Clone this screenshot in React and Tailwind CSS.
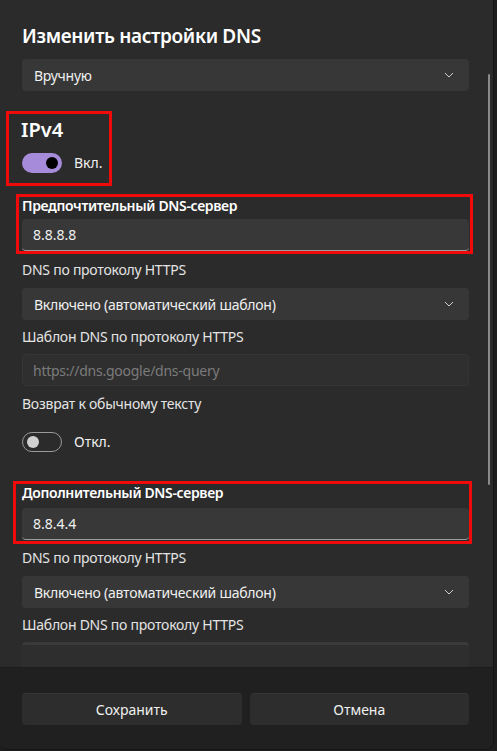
import React from "react";

const font = { fontFamily: '"Noto Sans", "Open Sans", sans-serif' };

const Chevron = () => (
  <svg width="10" height="6" viewBox="0 0 10 6" fill="none" className="text-[#cfcfcf]">
    <polyline points="1,1 5,5 9,1" stroke="currentColor" strokeWidth="1" />
  </svg>
);

const Select = ({ value }) => (
  <div className="flex h-[32px] items-center justify-between rounded-[4px] bg-[#373737] pl-[12px] pr-[15px] text-[14px] tracking-[-0.25px] text-[#f0f0f0]">
    <span>{value}</span>
    <Chevron />
  </div>
);

const Input = ({ value }) => (
  <div className="flex h-[32px] items-center rounded-[4px] border-b border-[#9c9c9c] bg-[#383838] px-[11px] text-[14px] text-[#f0f0f0]">
    {value}
  </div>
);

const Label = ({ children }) => (
  <div className="text-[14px] leading-[20px] tracking-[-0.25px] text-[#e4e4e4]">{children}</div>
);

const Toggle = ({ on, text }) => (
  <div className="flex items-center gap-[12px]">
    {on ? (
      <div className="flex h-[20px] w-[40px] items-center justify-end rounded-full bg-[#a68bdb] pr-[4px]">
        <div className="h-[12px] w-[12px] rounded-full bg-black" />
      </div>
    ) : (
      <div className="flex h-[20px] w-[40px] items-center rounded-full border border-[#9a9a9a] pl-[4px]">
        <div className="h-[12px] w-[12px] rounded-full bg-[#d0d0d0]" />
      </div>
    )}
    <span className="text-[14px] text-[#f0f0f0]">{text}</span>
  </div>
);

const redBox = "border-[3px] border-[#f00a0a]";

export default function App() {
  return (
    <div className="flex h-[751px] w-[497px] bg-[#1e1e1e]" style={font}>
      <div className="relative flex h-[750px] w-[494px] flex-col overflow-hidden rounded-b-[8px] border-r border-b border-[#161616] bg-[#2b2b2b]">
        <div className="flex-1 overflow-hidden pl-[22px] pr-[24px] pt-[22px]">
          <div className="h-[28px] text-[19px] font-semibold leading-[28px] tracking-[-0.35px] text-white">
            Изменить настройки DNS
          </div>
          <div className="mt-[9px]">
            <Select value="Вручную" />
          </div>

          {/* IPv4 */}
          <div className={`ml-[-16px] mt-[20px] w-[106px] pb-[10px] pl-[12px] pt-[3px] ${redBox}`}>
            <div className="text-[20px] font-semibold leading-[26px] text-white">IPv4</div>
            <div className="ml-[1px] mt-[9px]">
              <Toggle on text="Вкл." />
            </div>
          </div>

          {/* preferred */}
          <div className={`ml-[-6px] mr-[-4px] mt-[8px] pl-[3px] pr-[1px] pt-[1px] ${redBox}`}>
            <div className="text-[14px] font-semibold leading-[16px] tracking-[-0.35px] text-white">
              Предпочтительный DNS-сервер
            </div>
            <div className="mt-[5px]">
              <Input value="8.8.8.8" />
            </div>
          </div>

          <div className="mt-[6px]">
            <Label>DNS по протоколу HTTPS</Label>
          </div>
          <div className="mt-[8px]">
            <Select value="Включено (автоматический шаблон)" />
          </div>
          <div className="mt-[7px]">
            <Label>Шаблон DNS по протоколу HTTPS</Label>
          </div>
          <div className="mt-[7px] flex h-[32px] items-center rounded-[4px] border border-[#353535] bg-[#2f2f2f] px-[10px] text-[14px] tracking-[-0.25px] text-[#7b7b7b]">
            https://dns.google/dns-query
          </div>
          <div className="mt-[8px]">
            <Label>Возврат к обычному тексту</Label>
          </div>
          <div className="mt-[17px]">
            <Toggle text="Откл." />
          </div>

          {/* alternate */}
          <div className={`ml-[-9px] mr-[-3px] mt-[29px] pl-[6px] pt-[1px] pb-[1px] ${redBox}`}>
            <div className="text-[14px] font-semibold leading-[16px] tracking-[-0.35px] text-white">
              Дополнительный DNS-сервер
            </div>
            <div className="mt-[7px]">
              <Input value="8.8.4.4" />
            </div>
          </div>

          <div className="mt-[4px]">
            <Label>DNS по протоколу HTTPS</Label>
          </div>
          <div className="mt-[8px]">
            <Select value="Включено (автоматический шаблон)" />
          </div>
          <div className="mt-[7px]">
            <Label>Шаблон DNS по протоколу HTTPS</Label>
          </div>
          <div className="mt-[7px] h-[32px] rounded-[4px] border-t-[3px] border-[#3a3a3a] bg-[#2e2e2e]" />
        </div>

        <div className="absolute right-[3px] top-[74px] h-[411px] w-[2px] rounded-full bg-[#8a8a8a]" />

        <div className="flex h-[82px] shrink-0 items-start gap-[8px] border-t border-[#1c1c1c] bg-[#202020] pl-[22px] pr-[24px] pt-[25px]">
          <button className="h-[32px] flex-1 rounded-[4px] border-t border-[#343434] bg-[#2d2d2d] text-[14px] text-[#f0f0f0]">
            Сохранить
          </button>
          <button className="h-[32px] flex-1 rounded-[4px] border-t border-[#343434] bg-[#2d2d2d] text-[14px] text-[#f0f0f0]">
            Отмена
          </button>
        </div>
      </div>
    </div>
  );
}
